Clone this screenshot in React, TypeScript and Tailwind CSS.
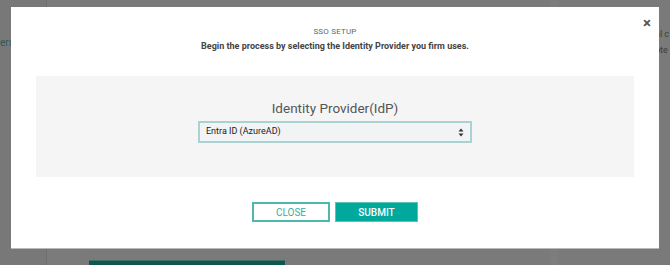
import React from 'react';

// SsoSetupModal.tsx

export default function App() {
  return (
    <div
      className="relative w-[670px] h-[265px] overflow-hidden bg-[#7a7a7a]"
      style={{ fontFamily: 'Roboto, "Liberation Sans", sans-serif' }}
    >
      {/* page behind the overlay */}
      <div className="flex h-full">
        <div className="w-[47px] h-full border-r border-[#6e6e6e] bg-[#787878] pt-[36px]">
          <div className="text-[10px] leading-[14px] text-[#2f5a55]">ers</div>
        </div>
        <div className="w-[34px] h-full bg-[#7b7b7b]" />
        <div className="flex-1 flex flex-col justify-end pl-[8px]">
          <div className="w-[196px] h-[5px] bg-[#0f564e] border-t border-[#3f6f69]" />
        </div>
        <div className="w-[150px] h-full flex">
          <div className="w-[8px] h-full bg-[#7d7d7d] ml-[30px]" />
          <div className="flex-1" />
          <div className="w-[15px] h-full pt-[26px] text-[9px] leading-[16px] text-[#3a3a3a] whitespace-nowrap">
            <div>al c</div>
            <div>pte</div>
          </div>
        </div>
      </div>

      {/* modal */}
      <div className="absolute left-[11px] top-[7px] w-[648px] h-[241px] bg-white shadow-[0_1px_0_#b8b8b8]">
        <button className="absolute right-[8px] top-[9px] text-[15px] leading-none font-bold text-[#555]">
          ×
        </button>
        <div className="flex flex-col items-center pt-[20px]">
          <div className="text-[8px] leading-[10px] text-[#666] tracking-[0.2px]">SSO SETUP</div>
          <div className="mt-[3px] text-[9px] leading-[12px] font-bold text-[#444]">
            Begin the process by selecting the Identity Provider you firm uses.
          </div>
        </div>
        <div className="mx-[25px] mt-[24px] h-[101px] bg-[#f5f5f5] flex flex-col items-center pt-[24px]">
          <div className="text-[13.5px] leading-[17px] text-[#555]">Identity Provider(IdP)</div>
          <div className="mt-[4px] w-[274px] h-[22px] border-2 border-[#a9d3d0] bg-[#f2f3f5] flex items-center justify-between pl-[6px] pr-[6px]">
            <span className="text-[9px] text-[#222]">Entra ID (AzureAD)</span>
            <svg width="6" height="9" viewBox="0 0 6 9">
              <path d="M3 0.5 L5.5 3.5 H0.5 Z" fill="#333" />
              <path d="M3 8.5 L5.5 5.5 H0.5 Z" fill="#333" />
            </svg>
          </div>
        </div>
        <div className="flex justify-center gap-[5px] mt-[25px]">
          <button className="w-[78px] h-[20px] border-2 border-[#4fb8ae] text-[10px] text-[#3aaea3] bg-white">
            CLOSE
          </button>
          <button className="w-[83px] h-[20px] border border-[#5cc2b8] bg-[#00a99b] text-[10px] font-medium text-white">
            SUBMIT
          </button>
        </div>
      </div>
    </div>
  );
}
